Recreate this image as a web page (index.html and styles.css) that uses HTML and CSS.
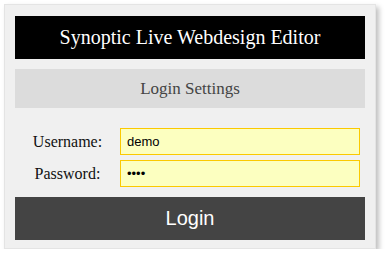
FILE: index.html
```html
<!DOCTYPE html>
<html>
    <head>
        <link rel="stylesheet" href="styles.css">
    </head>
    <body>
        <div class="panel">
            <h1 class="title">Synoptic Live Webdesign Editor</h1>
            <h2 class="subtitle">Login Settings</h2>

            <div class="fields">
                <div class="row">
                    <label for="username">Username:</label>
                    <input type="text" id="username" value="demo">
                </div>
                <div class="row">
                    <label for="password">Password:</label>
                    <input type="password" id="password" value="demo">
                </div>
            </div>

            <button class="login-btn">Login</button>
        </div>
    </body>
</html>
```

FILE: styles.css
```css
body {
    margin: 0;
    background-color: #ffffff;
    font-family: "Liberation Serif", serif;
}

.panel {
    width: 350px;
    margin: 4px 0 0 4px;
    padding: 11px 10px 8px 10px;
    background-color: #f0f0f0;
    border: 1px solid #e4e4e4;
    box-shadow: 3px 3px 5px rgba(0, 0, 0, 0.25);
}

.title {
    margin: 0;
    height: 43px;
    line-height: 43px;
    font-size: 20px;
    font-weight: normal;
    color: #ffffff;
    text-align: center;
    background-color: #000000;
}

.subtitle {
    margin: 10px 0 0 0;
    height: 39px;
    line-height: 39px;
    font-size: 17px;
    font-weight: normal;
    color: #444444;
    text-align: center;
    background-color: #dcdcdc;
}

.fields {
    display: flex;
    flex-direction: column;
    gap: 5px;
    padding: 20px 0 10px 0;
}

.row {
    display: flex;
    align-items: center;
}

label {
    width: 105px;
    font-size: 16px;
    color: #111;
    text-align: center;
}

input {
    width: 240px;
    height: 27px;
    padding: 0 6px;
    box-sizing: border-box;
    font-family: "Liberation Sans", sans-serif;
    font-size: 13px;
    color: #000;
    background-color: #fcffc0;
    border: 1px solid #fbc900;
    outline: none;
}

.login-btn {
    display: block;
    width: 350px;
    height: 43px;
    padding: 0;
    font-family: "Liberation Sans", sans-serif;
    font-size: 20px;
    color: #ffffff;
    background-color: #444444;
    border: none;
}
```
